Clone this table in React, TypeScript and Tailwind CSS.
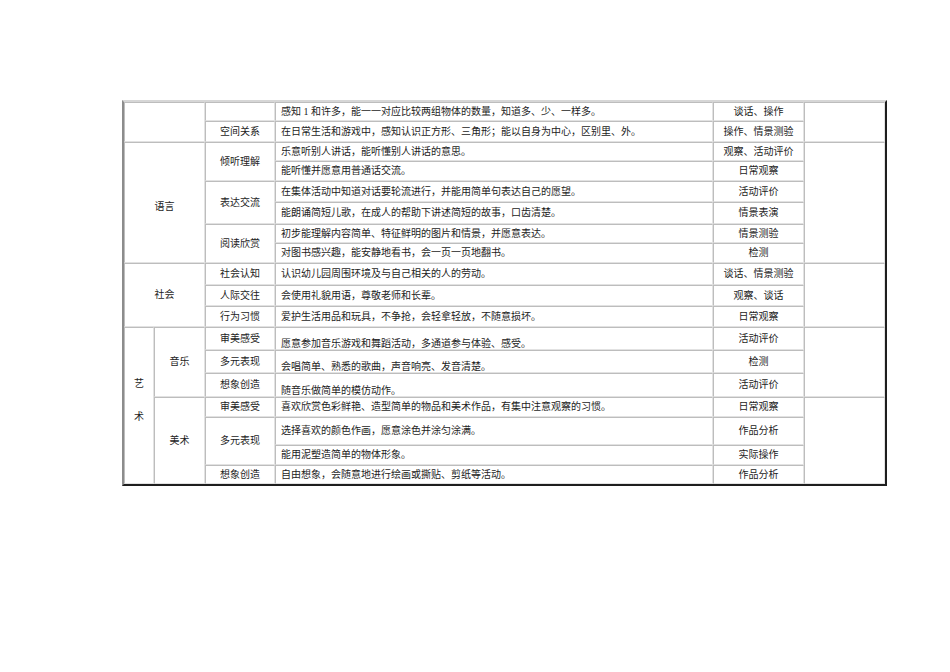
const cell =
  "p-0 border-t border-l border-r border-b border-t-[#bdbdbd] border-l-[#bdbdbd] border-r-[#e2e2e2] border-b-[#e2e2e2] text-center align-middle"
const text = cell.replace("text-center", "text-left") + " px-[5px]"
const low = text + " !align-bottom leading-[11px]"

export default function App() {
  return (
    <div className="min-h-screen bg-white pt-[100px] pl-[122px] font-['Liberation_Serif','Noto_Sans_CJK_SC',serif] text-[10px] leading-[12px] text-[#1c1c1c]">
      <table className="table-fixed w-[765px] border-separate border-spacing-0 border-2 border-t-[#d6d6d6] border-l-[#8c8c8c] border-r-[#1e1e1e] border-b-[#1e1e1e]">
        <colgroup>
          <col className="w-[30px]" />
          <col className="w-[51px]" />
          <col className="w-[70px]" />
          <col className="w-[438px]" />
          <col className="w-[91px]" />
          <col className="w-[81px]" />
        </colgroup>
        <tbody>
          {/* 数学（续） */}
          <tr className="h-[19px]">
            <td className={cell} colSpan={2} rowSpan={2}></td>
            <td className={cell}></td>
            <td className={text}>感知 1 和许多，能一一对应比较两组物体的数量，知道多、少、一样多。</td>
            <td className={cell}>谈话、操作</td>
            <td className={cell} rowSpan={2}></td>
          </tr>
          <tr className="h-[21px]">
            <td className={cell}>空间关系</td>
            <td className={text}>在日常生活和游戏中，感知认识正方形、三角形；能以自身为中心，区别里、外。</td>
            <td className={cell}>操作、情景测验</td>
          </tr>

          {/* 语言 */}
          <tr className="h-[19px]">
            <td className={cell} colSpan={2} rowSpan={6}>
              <span className="relative top-[4px]">语言</span>
            </td>
            <td className={cell} rowSpan={2}>倾听理解</td>
            <td className={text}>乐意听别人讲话，能听懂别人讲话的意思。</td>
            <td className={cell}>观察、活动评价</td>
            <td className={cell} rowSpan={6}></td>
          </tr>
          <tr className="h-[20px]">
            <td className={text}>能听懂并愿意用普通话交流。</td>
            <td className={cell}>日常观察</td>
          </tr>
          <tr className="h-[21px]">
            <td className={cell} rowSpan={2}>表达交流</td>
            <td className={text}>在集体活动中知道对话要轮流进行，并能用简单句表达自己的愿望。</td>
            <td className={cell}>活动评价</td>
          </tr>
          <tr className="h-[22px]">
            <td className={text}>能朗诵简短儿歌，在成人的帮助下讲述简短的故事，口齿清楚。</td>
            <td className={cell}>情景表演</td>
          </tr>
          <tr className="h-[19px]">
            <td className={cell} rowSpan={2}>阅读欣赏</td>
            <td className={text}>初步能理解内容简单、特征鲜明的图片和情景，并愿意表达。</td>
            <td className={cell}>情景测验</td>
          </tr>
          <tr className="h-[20px]">
            <td className={text}>对图书感兴趣，能安静地看书，会一页一页地翻书。</td>
            <td className={cell}>检测</td>
          </tr>

          {/* 社会 */}
          <tr className="h-[22px]">
            <td className={cell} colSpan={2} rowSpan={3}>社会</td>
            <td className={cell}>社会认知</td>
            <td className={text}>认识幼儿园周围环境及与自己相关的人的劳动。</td>
            <td className={cell}>谈话、情景测验</td>
            <td className={cell} rowSpan={3}></td>
          </tr>
          <tr className="h-[21px]">
            <td className={cell}>人际交往</td>
            <td className={text}>会使用礼貌用语，尊敬老师和长辈。</td>
            <td className={cell}>观察、谈话</td>
          </tr>
          <tr className="h-[21px]">
            <td className={cell}>行为习惯</td>
            <td className={text}>爱护生活用品和玩具，不争抢，会轻拿轻放，不随意损坏。</td>
            <td className={cell}>日常观察</td>
          </tr>

          {/* 艺术 / 音乐 */}
          <tr className="h-[23px]">
            <td className={cell} rowSpan={7}>
              <div className="flex flex-col items-center gap-[21px] pb-[10px]">
                <span>艺</span>
                <span>术</span>
              </div>
            </td>
            <td className={cell} rowSpan={3}>音乐</td>
            <td className={cell}>审美感受</td>
            <td className={low}>愿意参加音乐游戏和舞蹈活动，多通道参与体验、感受。</td>
            <td className={cell}>活动评价</td>
            <td className={cell} rowSpan={3}></td>
          </tr>
          <tr className="h-[23px]">
            <td className={cell}>多元表现</td>
            <td className={low}>会唱简单、熟悉的歌曲，声音响亮、发音清楚。</td>
            <td className={cell}>检测</td>
          </tr>
          <tr className="h-[24px]">
            <td className={cell}>想象创造</td>
            <td className={low}>随音乐做简单的模仿动作。</td>
            <td className={cell}>活动评价</td>
          </tr>

          {/* 美术 */}
          <tr className="h-[20px]">
            <td className={cell} rowSpan={4}>美术</td>
            <td className={cell}>审美感受</td>
            <td className={text}>喜欢欣赏色彩鲜艳、造型简单的物品和美术作品，有集中注意观察的习惯。</td>
            <td className={cell}>日常观察</td>
            <td className={cell} rowSpan={4}></td>
          </tr>
          <tr className="h-[28px]">
            <td className={cell} rowSpan={2}>多元表现</td>
            <td className={text}>选择喜欢的颜色作画，愿意涂色并涂匀涂满。</td>
            <td className={cell}>作品分析</td>
          </tr>
          <tr className="h-[20px]">
            <td className={text}>能用泥塑造简单的物体形象。</td>
            <td className={cell}>实际操作</td>
          </tr>
          <tr className="h-[19px]">
            <td className={cell}>想象创造</td>
            <td className={text}>自由想象，会随意地进行绘画或撕贴、剪纸等活动。</td>
            <td className={cell}>作品分析</td>
          </tr>
        </tbody>
      </table>
    </div>
  )
}
